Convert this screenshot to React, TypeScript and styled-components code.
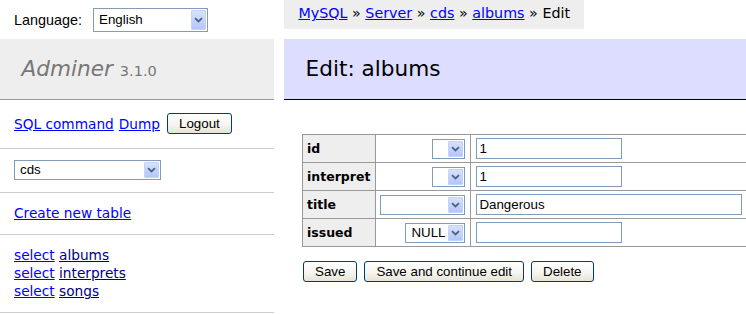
import styled, { createGlobalStyle } from "styled-components";

const GlobalStyle = createGlobalStyle`
  html, body {
    margin: 0;
    padding: 0;
    background: #fff;
  }

  body {
    font-family: "DejaVu Sans", Verdana, sans-serif;
    color: #000;
  }
`;

const tables = ["albums", "interprets", "songs"];

const fields = [
  { name: "id", fn: "", fnWidth: 33, value: "1", width: 146 },
  { name: "interpret", fn: "", fnWidth: 33, value: "1", width: 146 },
  { name: "title", fn: "", fnWidth: 85, value: "Dangerous", width: 266 },
  { name: "issued", fn: "NULL", fnWidth: 60, value: "", width: 146 },
];

interface DropdownProps {
  value: string;
  width: number;
  height: number;
  alignEnd?: boolean;
}

// ====================
// XP style select box
// ====================
const Dropdown = ({ value, width, height, alignEnd }: DropdownProps) => (
  <SelectBox $width={width} $height={height} $alignEnd={alignEnd}>
    <SelectValue>{value}</SelectValue>
    <ArrowButton>
      <svg width="9" height="6" viewBox="0 0 9 6">
        <path
          d="M1 1.2 L4.5 4.5 L8 1.2"
          stroke="#4d6185"
          strokeWidth="1.8"
          fill="none"
        />
      </svg>
    </ArrowButton>
  </SelectBox>
);

export default function App() {
  return (
    <>
      <GlobalStyle />
      <Page>
        <Sidebar>
          <LangBar>
            <LangLabel>Language:</LangLabel>
            <Dropdown value="English" width={115} height={24} />
          </LangBar>
          <Brand>
            <BrandName>Adminer</BrandName> <Version>3.1.0</Version>
          </Brand>
          <MenuSection>
            <MenuActions>
              <MenuLink href="#">SQL command</MenuLink>
              <MenuLink href="#">Dump</MenuLink>
              <XpButton>Logout</XpButton>
            </MenuActions>
          </MenuSection>
          <MenuSection>
            <Dropdown value="cds" width={147} height={20} />
          </MenuSection>
          <MenuSection>
            <MenuLink href="#">Create new table</MenuLink>
          </MenuSection>
          <MenuSection>
            {tables.map((t) => (
              <TableRow key={t}>
                <MenuLink href="#">select</MenuLink>{" "}
                <MenuLink href="#" $visited>
                  {t}
                </MenuLink>
              </TableRow>
            ))}
          </MenuSection>
        </Sidebar>

        <Main>
          <Breadcrumb>
            <CrumbLink href="#">MySQL</CrumbLink> »{" "}
            <CrumbLink href="#">Server</CrumbLink> »{" "}
            <CrumbLink href="#">cds</CrumbLink> »{" "}
            <CrumbLink href="#">albums</CrumbLink> » Edit
          </Breadcrumb>
          <Heading>Edit: albums</Heading>
          <Content>
            <EditTable>
              <tbody>
                {fields.map((f) => (
                  <tr key={f.name}>
                    <FieldName>{f.name}</FieldName>
                    <FnCell>
                      <Dropdown
                        value={f.fn}
                        width={f.fnWidth}
                        height={20}
                        alignEnd
                      />
                    </FnCell>
                    <ValueCell>
                      <TextInput
                        type="text"
                        defaultValue={f.value}
                        $width={f.width}
                      />
                    </ValueCell>
                  </tr>
                ))}
              </tbody>
            </EditTable>
            <Actions>
              <XpButton>Save</XpButton>
              <XpButton>Save and continue edit</XpButton>
              <XpButton>Delete</XpButton>
            </Actions>
          </Content>
        </Main>
      </Page>
    </>
  );
}

const Page = styled.div`
  display: grid;
  grid-template-columns: 274px 1fr;
  column-gap: 10px;
  min-height: 314px;
`;

const Sidebar = styled.div`
  display: flex;
  flex-direction: column;
`;

const LangBar = styled.div`
  height: 39px;
  display: flex;
  align-items: center;
  gap: 11px;
  padding: 0 14px;
  box-sizing: border-box;
`;

const LangLabel = styled.span`
  font-family: "Liberation Sans", Arial, sans-serif;
  font-size: 14.4px;
`;

const Brand = styled.h1`
  margin: 0;
  height: 60px;
  line-height: 60px;
  padding: 0 21.6px;
  background: #eee;
  border-bottom: 1px solid #999;
  font-size: 21.6px;
  font-weight: normal;
  color: #777;
  white-space: nowrap;
`;

const BrandName = styled.span`
  font-style: italic;
`;

const Version = styled.span`
  font-size: 14.5px;
`;

const MenuSection = styled.div`
  padding: 11px 14px 12px;
  border-bottom: 1px solid #ccc;
  font-size: 13.7px;
  line-height: 18px;
`;

const MenuActions = styled.div`
  display: flex;
  align-items: center;
  gap: 5px;
  height: 25px;

  button {
    margin-left: 2px;
    padding: 0 11px;
  }
`;

const MenuLink = styled.a<{ $visited?: boolean }>`
  color: ${(p) => (p.$visited ? "#000080" : "#0000ff")};
  text-decoration: underline;
`;

const TableRow = styled.div`
  white-space: nowrap;
`;

const Main = styled.div`
  display: flex;
  flex-direction: column;
  align-items: flex-start;
`;

const Breadcrumb = styled.div`
  height: 29px;
  line-height: 26px;
  padding: 0 14.4px;
  background: #eee;
  font-size: 14.3px;
  white-space: nowrap;
`;

const CrumbLink = styled.a`
  color: #0000ff;
  text-decoration: underline;
`;

const Heading = styled.h2`
  align-self: stretch;
  margin: 10px 0 0;
  height: 60px;
  line-height: 60px;
  padding: 0 21.6px;
  background: #ddf;
  border-bottom: 1px solid #000;
  font-size: 21.6px;
  font-weight: normal;
`;

const Content = styled.div`
  padding: 34px 0 0 18px;
`;

const EditTable = styled.table`
  border-collapse: collapse;
  border-top: 1px solid #999;
  border-left: 1px solid #999;
  font-size: 12.5px;
`;

const Cell = styled.td`
  border-right: 1px solid #999;
  border-bottom: 1px solid #999;
  padding: 3px 4px;
  vertical-align: middle;
`;

const FieldName = styled(Cell).attrs({ as: "th" })`
  background: #eee;
  text-align: left;
  font-weight: bold;
  white-space: nowrap;
  padding: 3px 5px 3px 4px;
`;

const FnCell = styled(Cell)`
  padding: 3px 5px 3px 4px;
`;

const ValueCell = styled(Cell)`
  padding: 3px 5px;
`;

const SelectBox = styled.div<{
  $width: number;
  $height: number;
  $alignEnd?: boolean;
}>`
  display: flex;
  align-items: center;
  width: ${(p) => p.$width}px;
  height: ${(p) => p.$height}px;
  margin-left: ${(p) => (p.$alignEnd ? "auto" : "0")};
  box-sizing: border-box;
  border: 1px solid #7f9db9;
  background: #fff;
  padding: 1px;
  font-family: "Liberation Sans", Arial, sans-serif;
  font-size: 13.33px;
`;

const SelectValue = styled.span`
  flex: 1;
  padding-left: 4px;
  white-space: nowrap;
  overflow: hidden;
`;

const ArrowButton = styled.span`
  width: 15px;
  align-self: stretch;
  display: flex;
  align-items: center;
  justify-content: center;
  box-sizing: border-box;
  border: 1px solid #c3d3fd;
  border-radius: 1px;
  background: linear-gradient(#d6e1fe, #b3c7f6);
`;

const TextInput = styled.input<{ $width: number }>`
  display: block;
  width: ${(p) => p.$width}px;
  height: 21px;
  box-sizing: border-box;
  margin: 0;
  padding: 0 2px;
  border: 1px solid #7f9db9;
  font-family: "Liberation Sans", Arial, sans-serif;
  font-size: 13.33px;
  color: #000;
  outline: none;
`;

const Actions = styled.div`
  display: flex;
  gap: 7px;
  margin-top: 14px;
  padding-left: 1px;

  button {
    padding: 0 11px;
  }
`;

const XpButton = styled.button`
  height: 21px;
  padding: 0 10px;
  margin: 0;
  border: 1px solid #003c74;
  border-radius: 3px;
  background: linear-gradient(#ffffff 0%, #f6f5f0 55%, #e6e3d6 100%);
  font-family: "Liberation Sans", Arial, sans-serif;
  font-size: 13.33px;
  color: #000;
  line-height: 19px;
  cursor: pointer;
`;
